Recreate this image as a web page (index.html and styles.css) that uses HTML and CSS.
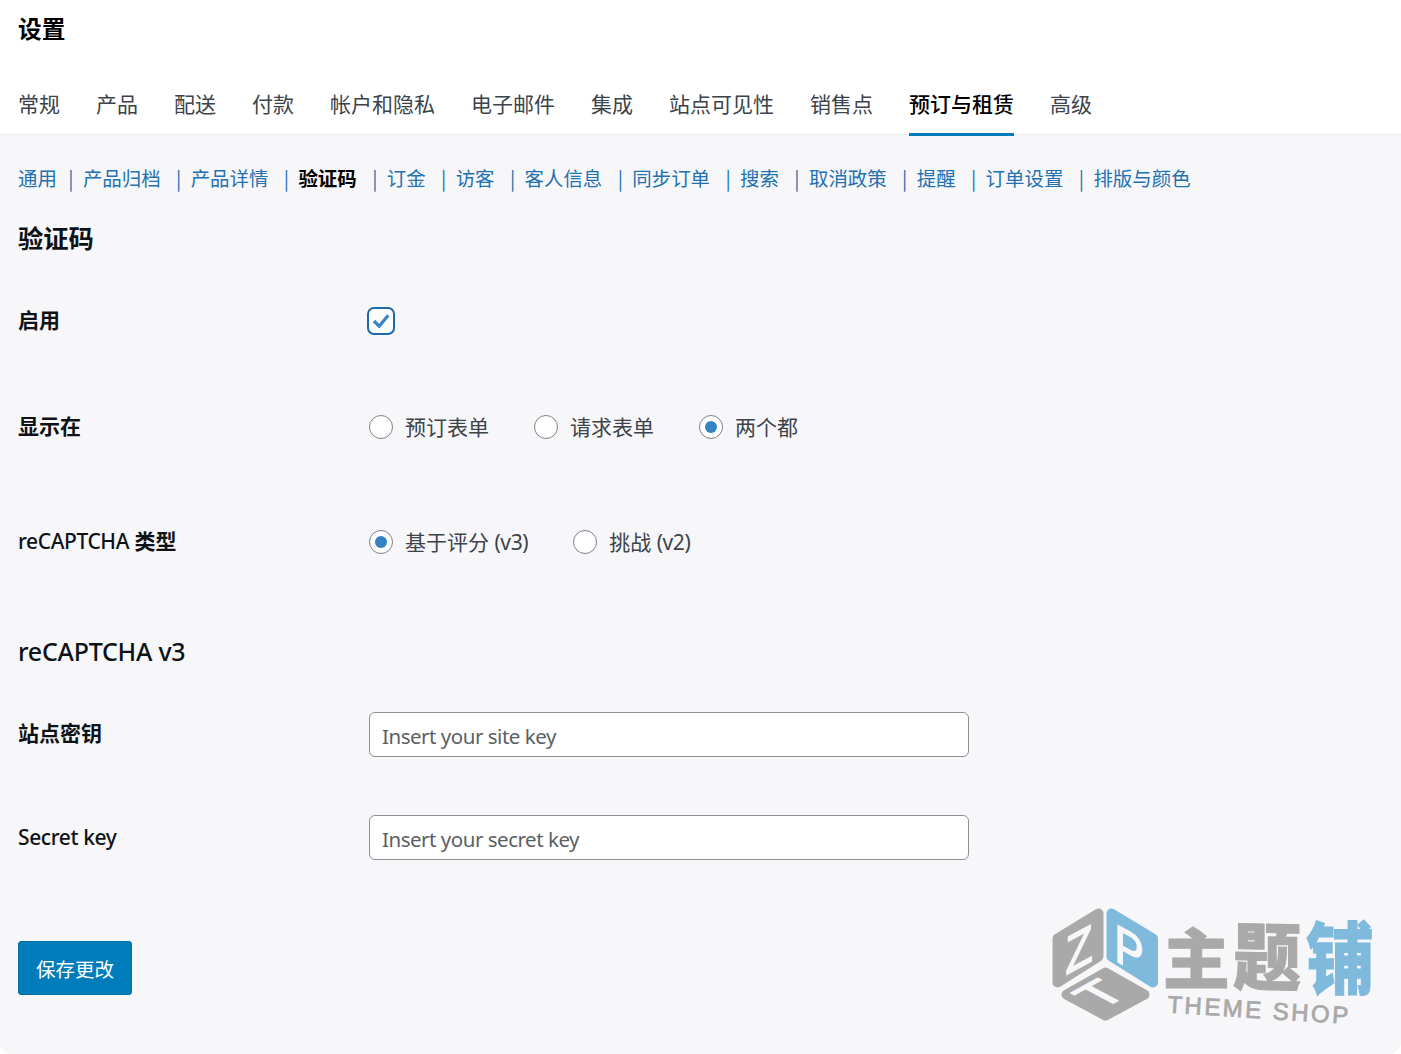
FILE: index.html
```html
<!DOCTYPE html>
<html lang="zh-CN">
  <head>
    <meta charset="UTF-8" />
    <meta name="viewport" content="width=device-width, initial-scale=1.0" />
    <title>设置</title>
    <link rel="stylesheet" href="styles.css">
  </head>
  <body>
    <div class="page">
      <header class="header">
        <h1 class="page-title">设置</h1>
        <nav class="tabs">
          <a class="tab">常规</a>
          <a class="tab">产品</a>
          <a class="tab">配送</a>
          <a class="tab">付款</a>
          <a class="tab">帐户和隐私</a>
          <a class="tab">电子邮件</a>
          <a class="tab">集成</a>
          <a class="tab">站点可见性</a>
          <a class="tab">销售点</a>
          <a class="tab tab-active">预订与租赁</a>
          <a class="tab">高级</a>
        </nav>
      </header>

      <main class="content">
        <nav class="subnav">
          <a>通用</a><span class="sep sep-first">|</span>
          <a>产品归档</a><span class="sep">|</span>
          <a>产品详情</a><span class="sep">|</span>
          <a class="current">验证码</a><span class="sep">|</span>
          <a>订金</a><span class="sep">|</span>
          <a>访客</a><span class="sep">|</span>
          <a>客人信息</a><span class="sep">|</span>
          <a>同步订单</a><span class="sep">|</span>
          <a>搜索</a><span class="sep">|</span>
          <a>取消政策</a><span class="sep">|</span>
          <a>提醒</a><span class="sep">|</span>
          <a>订单设置</a><span class="sep">|</span>
          <a>排版与颜色</a>
        </nav>

        <form class="settings-form">
          <h2 class="section-title">验证码</h2>
          <div class="row">
            <div class="label">启用</div>
            <span class="checkbox">
              <svg width="22" height="22" viewBox="0 0 22 22"><path d="M4 11 9.2 16.2 18.2 5.2" /></svg>
            </span>
          </div>
          <div class="row">
            <div class="label">显示在</div>
            <div class="options">
              <label class="option"><span class="radio"></span><span class="option-text">预订表单</span></label>
              <label class="option"><span class="radio"></span><span class="option-text">请求表单</span></label>
              <label class="option"><span class="radio checked"></span><span class="option-text">两个都</span></label>
            </div>
          </div>
          <div class="row row-type">
            <div class="label"><span class="label-latin">reCAPTCHA</span> 类型</div>
            <div class="options">
              <label class="option"><span class="radio checked"></span><span class="option-text">基于评分 <span class="latin">(v3)</span></span></label>
              <label class="option"><span class="radio"></span><span class="option-text">挑战 <span class="latin">(v2)</span></span></label>
            </div>
          </div>

          <h2 class="section-title section-v3">reCAPTCHA v3</h2>
          <div class="row row-key">
            <label class="label" for="site-key">站点密钥</label>
            <input type="text" id="site-key" class="key-input" placeholder="Insert your site key" />
          </div>
          <div class="row row-key">
            <label class="label" for="secret-key"><span class="label-latin">Secret key</span></label>
            <input type="text" id="secret-key" class="key-input" placeholder="Insert your secret key" />
          </div>
          <button type="button" class="btn-save">保存更改</button>
        </form>
      </main>

      <svg class="watermark" width="361" height="159" viewBox="0 0 361 159">
        <g class="cube">
          <path class="gray" d="M58.5 18.5 17.5 43.5V87.5L58.5 61.5Z" />
          <path class="blue" d="M71.5 18.5 113 43.5V87.5L71.5 61.5Z" />
          <path class="gray" d="M65.5 77.5 26.5 99.5 65.5 120.5 104.5 99.5Z" />
        </g>
        <g class="cube-letters">
          <text transform="matrix(.93 -.5 0 1.1 25.5 80)">Z</text>
          <text transform="matrix(.92 .5 0 1.1 74.5 65)">P</text>
          <text transform="matrix(.98 -.54 .94 .5 61 115)">T</text>
        </g>
        <g class="brand">
          <text class="gray" transform="matrix(.98 0 0 .96 123 87.5)">主</text>
          <text class="gray" transform="matrix(1 .02 0 1.08 193 88.5)">题</text>
          <text class="blue" transform="matrix(1 0 0 1.15 266 93)">铺</text>
        </g>
        <text class="brand-en" transform="translate(127 117.5) rotate(3.6)" textLength="181">THEME SHOP</text>
      </svg>
    </div>
  </body>
</html>
```

FILE: styles.css
```css
*,
body {
  margin: 0;
  padding: 0;
  box-sizing: border-box;
}
body {
  background: #fff;
  font-family: "Noto Sans", "Noto Sans CJK SC", sans-serif;
  font-size: 21px;
  color: #3c434a;
}
.page {
  position: relative;
  height: 1054px;
  background: #f7f7f9;
  border-radius: 12px;
  overflow: hidden;
}
.header {
  height: 135px;
  padding: 0 18px;
  background: #fff;
  border-bottom: 1px solid #ebecee;
}
.page-title {
  height: 75px;
  font-family: "Noto Sans CJK SC", sans-serif;
  font-size: 23.7px;
  line-height: 56px;
  color: #000;
}
.tabs {
  display: flex;
  gap: 36px;
  font-family: "Noto Sans CJK SC", sans-serif;
}
.tab {
  height: 61px;
  line-height: 56px;
  white-space: nowrap;
}
.tab-active {
  color: #000;
  font-weight: 500;
  border-bottom: 3px solid #007cba;
}
.content {
  padding: 25px 18px 0;
}
.subnav {
  display: flex;
  height: 40px;
  line-height: 36px;
  font-family: "Noto Sans CJK SC", sans-serif;
  font-size: 19.45px;
  color: #2271b1;
  white-space: nowrap;
}
.current {
  color: #000;
  font-weight: 700;
}
.sep {
  width: 30px;
  padding-left: 6px;
  text-align: center;
}
.sep-first {
  width: 26px;
  padding-left: 2px;
}
.section-title {
  height: 68px;
  padding-top: 14px;
  font-size: 25.3px;
  font-weight: 700;
  line-height: 48px;
  color: #0d1216;
}
.section-v3 {
  height: 80px;
  padding-top: 24px;
  font-size: 25px;
  font-weight: 500;
  letter-spacing: -.25px;
}
.row {
  display: grid;
  grid-template-columns: 351px 600px;
  align-items: center;
  height: 106px;
}
.row-type {
  height: 123px;
}
.row-key {
  height: 103px;
}
.label {
  padding-bottom: 4px;
  font-weight: 600;
  color: #0d1216;
}
.label-latin {
  font-weight: 500;
  letter-spacing: -.4px;
}
.row-key .label {
  padding-bottom: 5px;
}
.row-key .label-latin {
  position: relative;
  top: 2px;
}
.checkbox {
  display: grid;
  place-items: center;
  width: 28px;
  height: 28px;
  margin-left: -2px;
  background: #fff;
  border: 2px solid #2068ad;
  border-radius: 7px;
}
.checkbox path {
  fill: none;
  stroke: #3582c4;
  stroke-width: 3.2;
}
.options {
  display: flex;
  gap: 45px;
}
.option {
  display: flex;
  align-items: center;
  gap: 12px;
  white-space: nowrap;
}
.option-text {
  padding-bottom: 2px;
}
.latin {
  letter-spacing: -.4px;
}
.radio {
  display: grid;
  place-items: center;
  width: 24px;
  height: 24px;
  background: #fff;
  border: 1px solid #7c8087;
  border-radius: 50%;
}
.checked::before {
  content: "";
  width: 12px;
  height: 12px;
  border-radius: 50%;
  background: #3582c4;
}
.key-input {
  width: 600px;
  height: 45px;
  padding: 2px 12px 0;
  background: #fff;
  border: 1px solid #8c8f94;
  border-radius: 6px;
  font: inherit;
  font-size: 20.5px;
  letter-spacing: -.48px;
}
.key-input::placeholder {
  color: #5a5f65;
}
.btn-save {
  display: block;
  width: 114px;
  height: 54px;
  margin-top: 52px;
  padding-top: 1px;
  background: #007cba;
  border: 1px solid #0071a9;
  border-radius: 3px;
  font-family: "Noto Sans CJK SC", sans-serif;
  font-size: 19.5px;
  color: #fff;
}
.watermark {
  position: absolute;
  right: 0;
  bottom: 0;
}
.gray {
  fill: #a9a9aa;
  stroke: #a9a9aa;
}
.blue {
  fill: #7fbadd;
  stroke: #7fbadd;
}
.cube {
  stroke-width: 10;
  stroke-linejoin: round;
}
.cube-letters {
  fill: #f7f7f9;
  stroke: #f7f7f9;
  stroke-width: 1.5;
  font-family: "Liberation Sans", sans-serif;
  font-size: 48px;
}
.brand {
  font-family: "Noto Sans CJK SC", sans-serif;
  font-size: 68px;
  font-weight: 900;
  stroke-width: 1;
}
.brand-en {
  fill: #a9a9aa;
  stroke: #a9a9aa;
  stroke-width: .8;
  font-family: "Liberation Sans", sans-serif;
  font-size: 24px;
}
```
